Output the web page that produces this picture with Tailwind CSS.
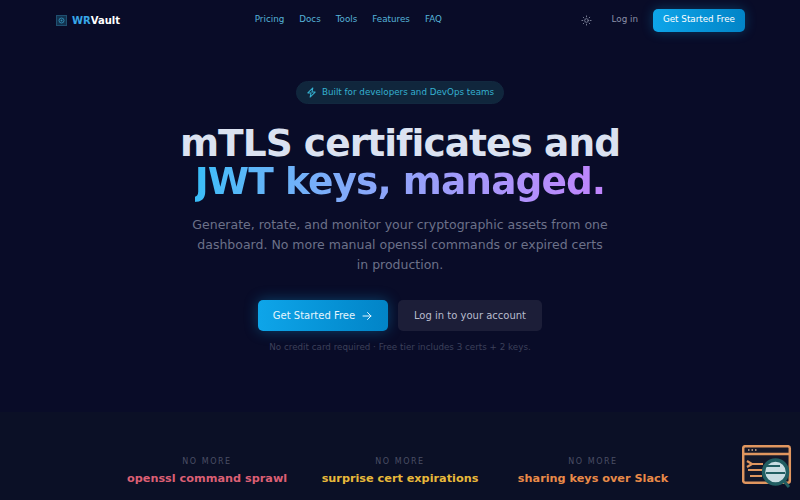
<!DOCTYPE html>
<html lang="en">
<head>
    <meta charset="UTF-8">
    <meta name="viewport" content="width=device-width, initial-scale=1.0">
    <title>WRVault</title>
    <script src="https://cdn.jsdelivr.net/npm/@tailwindcss/browser@4"></script>
</head>
<body class="h-[500px] overflow-hidden bg-[#090c28] font-['DejaVu_Sans',sans-serif]">

    <div class="relative h-[500px] overflow-hidden">
        <!-- Nav -->
        <nav class="flex h-10 items-center justify-between pl-[56px] pr-[55px]">
            <div class="flex items-center gap-[5px]">
                <svg class="h-[11px] w-[11px]" viewBox="0 0 11 11" fill="none">
                    <rect x="0.5" y="0.5" width="10" height="10" fill="#12324f" stroke="#1f4f70"/>
                    <circle cx="5.5" cy="5.5" r="2.5" stroke="#2f86ad" stroke-width="1"/>
                    <circle cx="5.5" cy="5.5" r="1" fill="#2f86ad"/>
                </svg>
                <span class="text-[10px] font-bold text-white"><span class="text-[#38a8e8]">WR</span>Vault</span>
            </div>
            <div class="mr-[4px] flex gap-[15px] text-[8.75px] text-[#56b3d9]">
                <span>Pricing</span>
                <span>Docs</span>
                <span>Tools</span>
                <span>Features</span>
                <span>FAQ</span>
            </div>
            <div class="flex items-center">
                <svg class="h-[11px] w-[11px] text-[#7d8299]" viewBox="0 0 24 24" fill="none" stroke="currentColor" stroke-width="2" stroke-linecap="round">
                    <circle cx="12" cy="12" r="4"/>
                    <path d="M12 2v2M12 20v2M4.9 4.9l1.4 1.4M17.7 17.7l1.4 1.4M2 12h2M20 12h2M4.9 19.1l1.4-1.4M17.7 6.3l1.4-1.4"/>
                </svg>
                <span class="ml-[20px] text-[8.75px] text-[#8b90a8]">Log in</span>
                <div class="ml-[15px] flex h-[23px] w-[92px] items-center justify-center rounded-[5px] bg-gradient-to-r from-[#0ea5e9] to-[#0284c7] text-[8.75px] font-medium text-white shadow-[0_0_12px_rgba(14,165,233,0.3)]">Get Started Free</div>
            </div>
        </nav>

        <!-- Hero -->
        <section class="flex flex-col items-center pt-[41px]">
            <div class="flex h-[23px] w-[208px] items-center justify-center gap-[5px] rounded-full border border-[#12283f] bg-[#10263c] text-[8.75px] text-[#35b0d0]">
                <svg class="h-[11px] w-[11px]" viewBox="0 0 24 24" fill="none" stroke="currentColor" stroke-width="2.2" stroke-linejoin="round">
                    <path d="M15 2 4 13h7l-2 9 11-11h-7z"/>
                </svg>
                <span>Built for developers and DevOps teams</span>
            </div>
            <h1 class="mt-[20px] text-center text-[37.5px] leading-[38px] font-bold tracking-tight text-[#dbe2f1]">
                mTLS certificates and<br>
                <span class="bg-gradient-to-r from-[#38bdf8] to-[#c084fc] bg-clip-text text-transparent">JWT keys, managed.</span>
            </h1>
            <p class="mt-[15px] w-[420px] text-center text-[12.5px] leading-[20px] text-[#6c7189]">Generate, rotate, and monitor your cryptographic assets from one dashboard. No more manual openssl commands or expired certs in production.</p>
            <div class="mt-[25px] flex gap-[10px]">
                <div class="flex h-[31px] w-[130px] items-center justify-center gap-[6px] rounded-[5px] bg-gradient-to-r from-[#0ea5e9] to-[#0284c7] text-[10px] font-medium text-[#e6f5fd] shadow-[0_0_14px_rgba(14,165,233,0.35)]">
                    Get Started Free
                    <svg class="h-[12px] w-[12px]" viewBox="0 0 24 24" fill="none" stroke="currentColor" stroke-width="2" stroke-linecap="round" stroke-linejoin="round"><path d="M4 12h16M13 5l7 7-7 7"/></svg>
                </div>
                <div class="flex h-[31px] w-[144px] items-center justify-center rounded-[5px] bg-[#1c1e38] text-[10px] font-medium text-[#b8bccd]">Log in to your account</div>
            </div>
            <p class="mt-[10px] text-[8.75px] text-[#3c405a]">No credit card required · Free tier includes 3 certs + 2 keys.</p>
        </section>

        <!-- No more strip -->
        <section class="absolute inset-x-0 bottom-0 h-[88px] bg-[#0b1026]">
            <div class="flex justify-center gap-[33px] pt-[44px] text-center">
                <div class="w-[160px]">
                    <p class="text-[8px] tracking-[0.19em] text-[#4a4e64]">NO MORE</p>
                    <p class="mt-[3px] text-[11.25px] font-bold whitespace-nowrap text-[#dc5f74]">openssl command sprawl</p>
                </div>
                <div class="w-[160px]">
                    <p class="text-[8px] tracking-[0.19em] text-[#4a4e64]">NO MORE</p>
                    <p class="mt-[3px] text-[11.25px] font-bold whitespace-nowrap text-[#e8b93a]">surprise cert expirations</p>
                </div>
                <div class="w-[160px]">
                    <p class="text-[8px] tracking-[0.19em] text-[#4a4e64]">NO MORE</p>
                    <p class="mt-[3px] text-[11.25px] font-bold whitespace-nowrap text-[#e98a48]">sharing keys over Slack</p>
                </div>
            </div>
        </section>

        <!-- Floating badge -->
        <svg class="absolute left-[742px] top-[445px] h-[50px] w-[50px]" viewBox="0 0 50 50" fill="none">
            <rect x="1.2" y="1.2" width="46.6" height="36.6" rx="2" fill="#14182a" stroke="#e0965f" stroke-width="2.5"/>
            <path d="M1 9h47" stroke="#e0965f" stroke-width="2.5"/>
            <path d="M6 5h1.5M9.5 5h1.5M13 5h1.5" stroke="#d9b08e" stroke-width="1.5"/>
            <path d="M5 16l5 3-5 3M10 19h11M6 25h15M8 31h12" stroke="#e0965f" stroke-width="2.2"/>
            <path d="M41 35l6 7" stroke="#215e62" stroke-width="3"/>
            <circle cx="33.5" cy="27" r="12" fill="#c9dde3" stroke="#215e62" stroke-width="3.5"/>
            <path d="M23 21h15M24 28h19" stroke="#215e62" stroke-width="1.8"/>
        </svg>
    </div>

</body>
</html>
